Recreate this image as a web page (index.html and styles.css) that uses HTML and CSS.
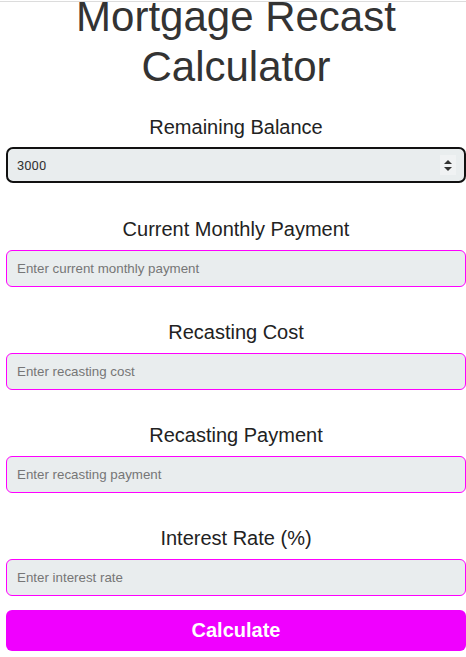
FILE: index.html
```html
<!DOCTYPE html>
<html lang="en">
<head>
    <meta charset="UTF-8">
    <meta name="viewport" content="width=device-width, initial-scale=1.0">
    <title>Mortgage Recast Calculator</title>
    <link rel="stylesheet" href="styles.css">
</head>
<body>
    <div class="topline"></div>
    <div class="container">
        <h1>Mortgage Recast Calculator</h1>

        <div class="field field-select">
            <label for="balance">Remaining Balance</label>
            <div class="select-wrap">
                <select id="balance">
                    <option>3000</option>
                    <option>5000</option>
                    <option>10000</option>
                </select>
                <span class="select-arrows">
                    <svg width="8" height="11" viewBox="0 0 8 11">
                        <path d="M4 0 L8 4 L0 4 Z" fill="#333"/>
                        <path d="M0 7 L8 7 L4 11 Z" fill="#333"/>
                    </svg>
                </span>
            </div>
        </div>

        <div class="field">
            <label for="monthly">Current Monthly Payment</label>
            <input type="text" id="monthly" placeholder="Enter current monthly payment">
        </div>

        <div class="field">
            <label for="cost">Recasting Cost</label>
            <input type="text" id="cost" placeholder="Enter recasting cost">
        </div>

        <div class="field">
            <label for="payment">Recasting Payment</label>
            <input type="text" id="payment" placeholder="Enter recasting payment">
        </div>

        <div class="field">
            <label for="rate">Interest Rate (%)</label>
            <input type="text" id="rate" placeholder="Enter interest rate">
        </div>

        <button class="calc-btn" id="calc-button">Calculate</button>
    </div>
</body>
</html>
```

FILE: styles.css
```css
* {
    box-sizing: border-box;
}
body {
    margin: 0;
    padding: 0;
    background-color: #fff;
    font-family: 'Liberation Sans', Arial, sans-serif;
    overflow: hidden;
}
.topline {
    height: 1px;
    margin-top: 1px;
    background-color: #dcdcdc;
}
.container {
    padding-left: 6px;
}
h1 {
    margin: -10px 0 23px;
    text-align: center;
    font-size: 42px;
    font-weight: normal;
    line-height: 50px;
    color: #333;
}
.field {
    margin-bottom: 33px;
}
.field:last-of-type {
    margin-bottom: 14px;
}
label {
    display: block;
    margin-bottom: 9px;
    text-align: center;
    font-size: 20px;
    line-height: 24px;
    color: #222;
}
.field-select {
    margin-bottom: 34px;
}
.field-select label {
    margin-bottom: 8px;
}
.select-wrap {
    position: relative;
}
select {
    display: block;
    width: 100%;
    height: 36px;
    padding: 0 9px;
    appearance: none;
    -webkit-appearance: none;
    background-color: #e9edee;
    border: 2px solid #111;
    border-radius: 7px;
    font-family: Roboto, sans-serif;
    font-size: 13px;
    color: #333;
}
.select-arrows {
    position: absolute;
    right: 10px;
    top: 8px;
    width: 16px;
    height: 20px;
    display: flex;
    align-items: center;
    justify-content: center;
    background-color: #f0f2f3;
    pointer-events: none;
}
input {
    display: block;
    width: 100%;
    height: 37px;
    padding: 0 10px;
    background-color: #e9edee;
    border: 1px solid #ff00ff;
    border-radius: 6px;
    font-family: 'Liberation Sans', Arial, sans-serif;
    font-size: 13.33px;
    color: #333;
}
input::placeholder {
    color: #767676;
}
.calc-btn {
    display: block;
    width: 100%;
    height: 41px;
    background-color: #f000ff;
    color: #fff;
    border: none;
    border-radius: 6px;
    font-family: 'Liberation Sans', Arial, sans-serif;
    font-size: 20px;
    font-weight: bold;
    cursor: pointer;
}
```
